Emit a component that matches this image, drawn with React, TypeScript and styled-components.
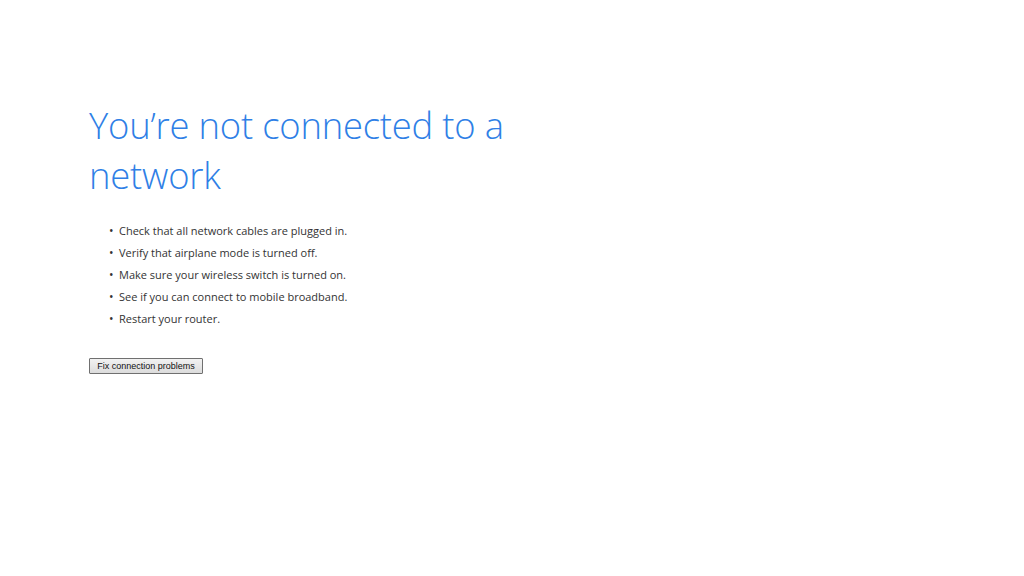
import React from "react";
import styled, { createGlobalStyle } from "styled-components";

const Global = createGlobalStyle`
  html, body { margin: 0; padding: 0; background: #fff; }
  body { width: 1024px; height: 576px; overflow: hidden; }
`;

const Page = styled.main`
  padding: 100px 0 0 89px;
  font-family: "Open Sans", "Noto Sans", sans-serif;
`;

const Title = styled.h1`
  margin: 0;
  width: 440px;
  font-weight: 300;
  font-size: 36.4px;
  line-height: 50px;
  color: #2f7fe6;
  letter-spacing: -0.2px;
`;

const List = styled.ul`
  margin: 20px 0 0 0;
  padding: 0 0 0 30px;
  list-style: none;
`;

const Item = styled.li`
  position: relative;
  font-size: 11px;
  line-height: 22px;
  color: #333;
  &::before {
    content: "•";
    position: absolute;
    left: -10px;
    font-size: 12px;
    color: #333;
  }
`;

const FixButton = styled.button`
  display: block;
  margin-top: 28px;
  height: 16px;
  width: 114px;
  padding: 0;
  font-family: "Liberation Sans", Arial, sans-serif;
  font-size: 9px;
  color: #111;
  background: linear-gradient(#f2f2f2, #dcdcdc);
  border: 1px solid #707070;
  border-radius: 1px;
`;

const tips = [
  "Check that all network cables are plugged in.",
  "Verify that airplane mode is turned off.",
  "Make sure your wireless switch is turned on.",
  "See if you can connect to mobile broadband.",
  "Restart your router.",
];

export default function App() {
  return (
    <>
      <Global />
      <Page>
        <Title>You’re not connected to a network</Title>
        <List>
          {tips.map((t) => (
            <Item key={t}>{t}</Item>
          ))}
        </List>
        <FixButton>Fix connection problems</FixButton>
      </Page>
    </>
  );
}
